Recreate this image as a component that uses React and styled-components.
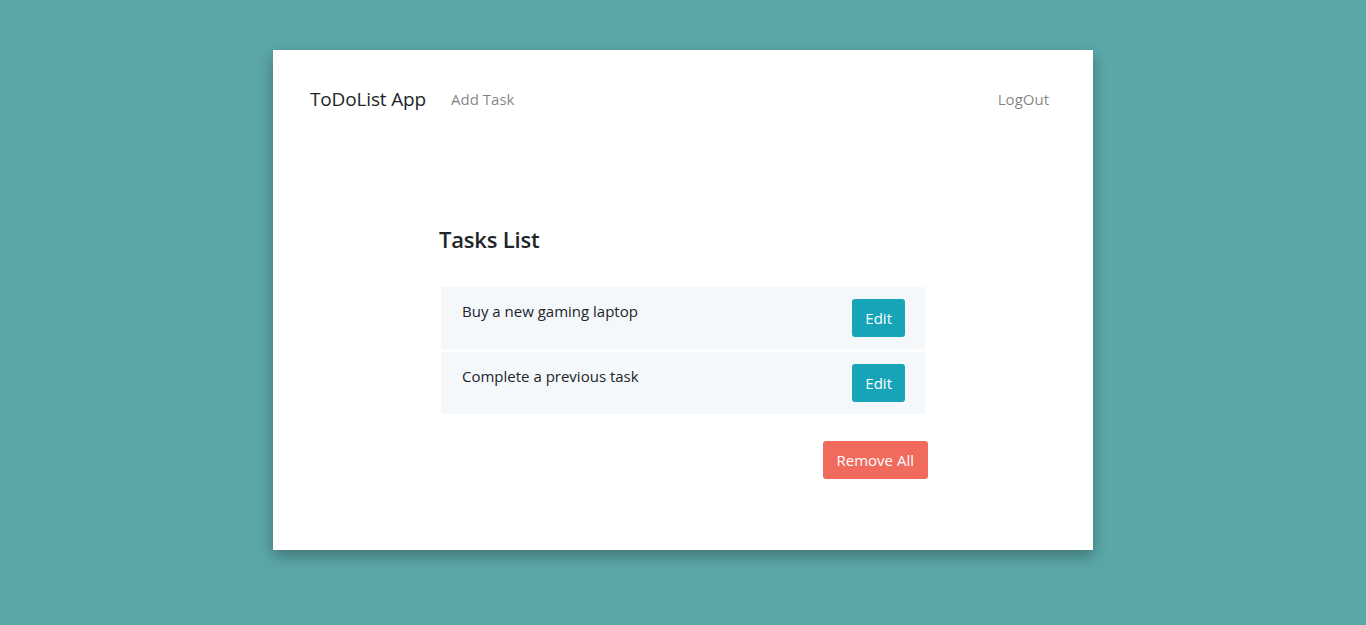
import React from "react";
import styled, { createGlobalStyle } from "styled-components";

const GlobalStyle = createGlobalStyle`
  html, body {
    margin: 0;
    padding: 0;
    background-color: #5ba7a8;
    font-family: "Open Sans", "Noto Sans", sans-serif;
    color: #212529;
  }
  * {
    box-sizing: border-box;
  }
`;

const Page = styled.div`
  min-height: 625px;
  padding-top: 50px;
  display: flex;
  justify-content: center;
`;

const Card = styled.div`
  width: 820px;
  height: 500px;
  background-color: #fff;
  box-shadow: 0 6px 14px rgba(0, 0, 0, 0.3);
  display: flex;
  flex-direction: column;
`;

const Navbar = styled.nav`
  display: flex;
  align-items: center;
  padding: 0 36px 0 37px;
  height: 98px;
`;

const Brand = styled.span`
  font-size: 19px;
  color: #212529;
  margin-right: 17px;
  letter-spacing: -0.15px;
`;

const NavLink = styled.a`
  font-size: 15px;
  color: rgba(0, 0, 0, 0.5);
  padding: 0 8px;
  cursor: pointer;
  ${(props) => props.$right && "margin-left: auto;"}
`;

const Content = styled.div`
  width: 490px;
  margin: 0 auto;
  padding-top: 77px;
  display: flex;
  flex-direction: column;
`;

const Heading = styled.h4`
  margin: 0 0 34px 1px;
  font-size: 22px;
  font-weight: 600;
  line-height: 28px;
  letter-spacing: -0.2px;
  color: #212529;
`;

const List = styled.ul`
  list-style: none;
  margin: 0 3px 27px;
  padding: 0;
  display: flex;
  flex-direction: column;
  gap: 3px;
`;

const Item = styled.li`
  height: 62px;
  background-color: #f5f8fb;
  display: flex;
  justify-content: space-between;
  align-items: flex-start;
  padding: 12px 20px 0 21px;
`;

const ItemText = styled.span`
  font-size: 15px;
  line-height: 24px;
  color: #212529;
`;

const Button = styled.button`
  border: none;
  border-radius: 3px;
  height: 38px;
  padding: 0 ${(props) => (props.$danger ? "14px" : "13px")};
  font-family: inherit;
  font-size: 15px;
  color: #fff;
  cursor: pointer;
  background-color: ${(props) => (props.$danger ? "#f16a5e" : "#17a3b8")};
`;

const Footer = styled.div`
  display: flex;
  justify-content: flex-end;
`;

const tasks = ["Buy a new gaming laptop", "Complete a previous task"];

const App = () => {
  return (
    <>
      <GlobalStyle />
      <Page>
        <Card>
          <Navbar>
            <Brand>ToDoList App</Brand>
            <NavLink>Add Task</NavLink>
            <NavLink $right>LogOut</NavLink>
          </Navbar>
          <Content>
            <Heading>Tasks List</Heading>
            <List>
              {tasks.map((task) => (
                <Item key={task}>
                  <ItemText>{task}</ItemText>
                  <Button>Edit</Button>
                </Item>
              ))}
            </List>
            <Footer>
              <Button $danger>Remove All</Button>
            </Footer>
          </Content>
        </Card>
      </Page>
    </>
  );
};

export default App;
